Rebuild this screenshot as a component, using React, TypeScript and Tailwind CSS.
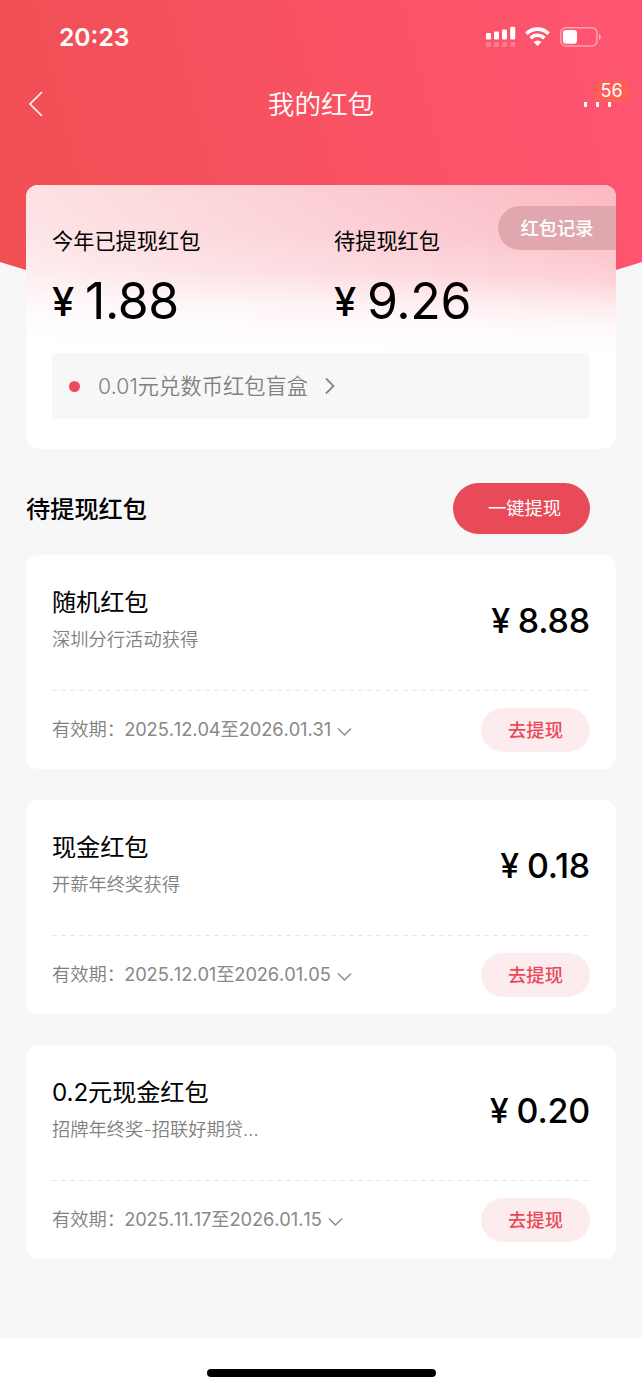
type Packet = {
  title: string;
  source: string;
  amount: string;
  period: string;
};

const packets: Packet[] = [
  { title: "随机红包", source: "深圳分行活动获得", amount: "8.88", period: "2025.12.04至2026.01.31" },
  { title: "现金红包", source: "开薪年终奖获得", amount: "0.18", period: "2025.12.01至2026.01.05" },
  { title: "0.2元现金红包", source: "招牌年终奖-招联好期贷...", amount: "0.20", period: "2025.11.17至2026.01.15" },
];

function StatusBar() {
  return (
    <div className="flex h-[73px] items-center justify-between pl-[59px] pr-[40px]">
      <span className="pt-0.5 text-[24.6px] leading-none font-semibold">20:23</span>
      <div className="flex items-center">
        <svg width="30" height="22" viewBox="0 0 30 22" fill="#fff" aria-hidden="true">
          <rect x="0" y="7" width="5" height="6.5" rx="1.3" />
          <rect x="8" y="5.5" width="5" height="8" rx="1.3" />
          <rect x="16" y="3.5" width="5" height="10" rx="1.3" />
          <rect x="24.2" y="0.7" width="5" height="12.8" rx="1.3" />
          <g opacity="0.25">
            <rect x="0" y="16" width="5" height="5" rx="1.3" />
            <rect x="8" y="16" width="5" height="5" rx="1.3" />
            <rect x="16" y="16" width="5" height="5" rx="1.3" />
            <rect x="24.2" y="16" width="5" height="5" rx="1.3" />
          </g>
        </svg>
        <svg className="ml-[9px]" width="25" height="20" viewBox="0 0 25 20" fill="none" aria-hidden="true">
          <path d="M1.4 6.7a15.6 15.6 0 0 1 22.2 0" stroke="#fff" strokeWidth="3.7" />
          <path d="M5.6 11.2a9.7 9.7 0 0 1 13.8 0" stroke="#fff" strokeWidth="3.5" />
          <path d="M12.5 19l-3.9-4a5.5 5.5 0 0 1 7.8 0z" fill="#fff" />
        </svg>
        <svg className="ml-2.5" width="42" height="20" viewBox="0 0 42 20" fill="none" aria-hidden="true">
          <rect x="0.8" y="0.8" width="36.2" height="18.2" rx="5" stroke="#fff" strokeOpacity="0.45" strokeWidth="1.5" />
          <rect x="3" y="3" width="14" height="13.8" rx="3" fill="#fff" />
          <path d="M39 6.8c2.3 1 2.3 5.2 0 6.2z" fill="#fff" fillOpacity="0.5" />
        </svg>
      </div>
    </div>
  );
}

function NavBar() {
  return (
    <div className="flex h-[62px] items-center justify-between pr-7 pl-7">
      <svg width="40" height="26" viewBox="0 0 40 26" fill="none" aria-hidden="true">
        <path d="M14 1L2 13l12 12" stroke="#fff" strokeWidth="1.6" />
      </svg>
      <h1 className="text-[26.6px] leading-none font-[350]">我的红包</h1>
      <div className="relative flex w-10 gap-[9px] pl-[10px]">
        <span className="absolute -top-[23px] left-[19px] flex h-6 w-[37px] items-center justify-center rounded-full bg-[#fe5d58] text-[18px] leading-none">
          56
        </span>
        <i className="relative h-[5px] w-[3px] shrink-0 bg-white" />
        <i className="relative h-[5px] w-[3px] shrink-0 bg-white" />
        <i className="relative h-[5px] w-[3px] shrink-0 bg-white" />
      </div>
    </div>
  );
}

function Total({ label, amount }: { label: string; amount: string }) {
  return (
    <div className="w-[282px] shrink-0">
      <div className="text-[21.2px] leading-[30px]">{label}</div>
      <div className="mt-[15px] flex h-[60px] items-baseline leading-[60px]">
        <span className="relative -top-[3px] w-[33px] text-[40px] font-medium">¥</span>
        <span className="text-[50px] tracking-[-0.4px]">{amount}</span>
      </div>
    </div>
  );
}

function Summary() {
  return (
    <section className="relative mx-[26px] mt-[50px] h-[264px] overflow-hidden rounded-[12px] bg-white px-[26px] pt-[41px]">
      <div
        className="absolute inset-0 bg-[linear-gradient(181deg,rgba(255,255,255,0)_0%,rgba(255,255,255,0.12)_20%,rgba(255,255,255,0.35)_34%,rgba(255,255,255,0.75)_45%,rgba(255,255,255,0.94)_54%,#fff_62%),linear-gradient(to_right,#fde1e3,#fbcdd3_50%,#fcb8c2)]"
        aria-hidden="true"
      />
      <div className="relative flex">
        <Total label="今年已提现红包" amount="1.88" />
        <Total label="待提现红包" amount="9.26" />
      </div>
      <a className="relative mt-[22px] flex h-[66px] items-center rounded-[5px] bg-[#f7f7f7] pl-[17px] text-[21.2px] font-[350] text-[#808080]">
        <i className="mr-[18px] size-[11px] rounded-full bg-[#ef4a5c]" />
        <span className="pt-0.5 tracking-[0.1px]">0.01元兑数币红包盲盒</span>
        <svg className="ml-[17px]" width="10" height="18" viewBox="0 0 10 18" fill="none" aria-hidden="true">
          <path d="M1 1.5L8.5 9 1 16.5" stroke="#858585" strokeWidth="1.8" />
        </svg>
      </a>
      <button className="absolute top-[21px] right-0 h-11 w-[118px] rounded-l-full bg-[#e0a8ae] pt-0.5 text-[18.3px] font-medium text-white">
        红包记录
      </button>
    </section>
  );
}

function PacketCard({ title, source, amount, period }: Packet) {
  return (
    <article className="h-[214px] rounded-[12px] bg-white px-[26px]">
      <div className="flex h-[135px] justify-between">
        <div className="pt-[31px]">
          <h3 className="text-[24.2px] leading-[34px] tracking-[-0.1px]">{title}</h3>
          <p className="mt-[6px] text-[18.3px] leading-[26px] font-[350] text-[#808080]">{source}</p>
        </div>
        <div className="pt-[43px] text-[34px] leading-[46px] font-medium tracking-[-0.2px]">
          <span className="mr-2">¥</span>
          {amount}
        </div>
      </div>
      <div className="h-px bg-[repeating-linear-gradient(to_right,#e6e6e6_0_5px,transparent_5px_9px)]" />
      <div className="flex h-[78px] items-center text-[18.3px]">
        <span className="font-[350] text-[#808080]">有效期：</span>
        <span className="-ml-px tracking-[-0.1px] text-[#888] [font-kerning:none]">{period}</span>
        <svg className="mt-1 ml-1.5" width="15" height="10" viewBox="0 0 15 10" fill="none" aria-hidden="true">
          <path d="M1 1.5l6.5 6.5L14 1.5" stroke="#888" strokeWidth="1.3" />
        </svg>
        <button className="ml-auto h-11 w-[109px] rounded-full bg-[#fdecee] pt-px font-medium text-[#e84a5a]">去提现</button>
      </div>
    </article>
  );
}

export default function App() {
  return (
    <main className="flex h-[1389px] w-[642px] flex-col bg-[#f7f7f7] font-['Inter','Noto_Sans_CJK_SC',sans-serif] text-black">
      <div className="relative">
        {/* Red backdrop with the curved lower edge */}
        <div
          className="absolute inset-x-0 top-0 h-[300px] bg-[linear-gradient(76deg,#f04f52_0%,#f4515c_30%,#fa5265_60%,#fd546f_90%)] [clip-path:polygon(0_0,100%_0,100%_262px,616px_270px,540px_288px,321px_300px,102px_288px,26px_270px,0_262px)]"
          aria-hidden="true"
        />
        <div className="relative">
          <header className="text-white">
            <StatusBar />
            <NavBar />
          </header>
          <Summary />
        </div>
      </div>

      <div className="mt-[34px] flex h-[51px] items-center justify-between pr-[52px] pl-[26px]">
        <h2 className="pt-1 text-[24.2px] font-medium">待提现红包</h2>
        <button className="h-[51px] w-[137px] rounded-full bg-[#e84a58] pt-px pl-1.5 text-[18.3px] text-white">一键提现</button>
      </div>

      <div className="mx-[26px] mt-[21px] flex flex-col gap-[31px]">
        {packets.map((packet) => (
          <PacketCard key={packet.title} {...packet} />
        ))}
      </div>

      <footer className="mt-auto flex h-[51px] justify-center bg-white pt-[31px]">
        <div className="h-2 w-[229px] rounded-full bg-black" />
      </footer>
    </main>
  );
}
